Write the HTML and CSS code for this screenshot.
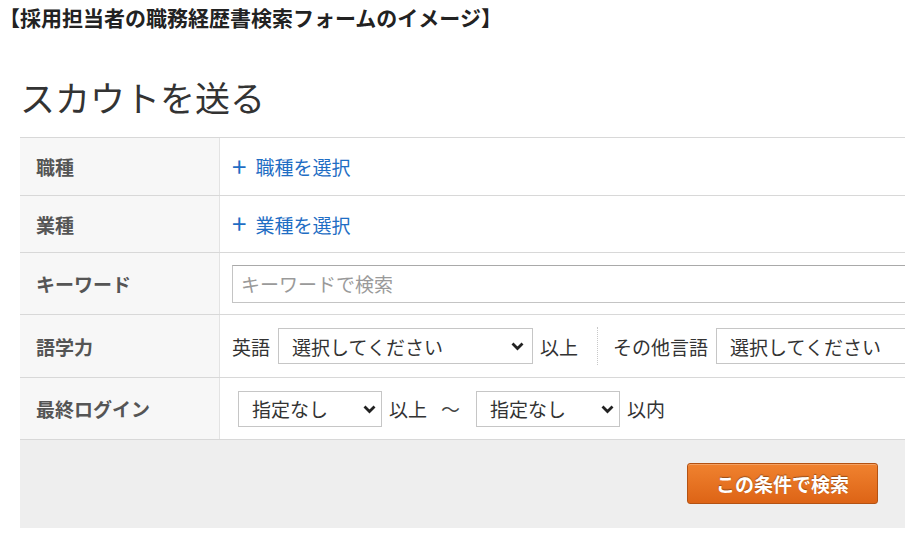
FILE: index.html
```html
<!DOCTYPE html>
<html lang="ja">
<head>
<meta charset="utf-8">
<title>スカウトを送る</title>
<link rel="stylesheet" href="styles.css">
</head>
<body>
<div class="caption">【採用担当者の職務経歴書検索フォームのイメージ】</div>
<h1 class="title">スカウトを送る</h1>
<div class="form">
  <div class="row row-a">
    <div class="label">職種</div>
    <div class="field"><a class="add" href="#"><span class="plus">+</span>職種を選択</a></div>
  </div>
  <div class="row row-b">
    <div class="label">業種</div>
    <div class="field"><a class="add" href="#"><span class="plus">+</span>業種を選択</a></div>
  </div>
  <div class="row row-c">
    <div class="label">キーワード</div>
    <div class="field"><input class="keyword" type="text" placeholder="キーワードで検索"></div>
  </div>
  <div class="row row-d">
    <div class="label">語学力</div>
    <div class="field">
      <span class="txt">英語</span>
      <span class="sel sel-lang">
        <select><option>選択してください</option></select>
        <svg class="chev" width="13" height="9" viewBox="0 0 13 9"><path d="M1.5 1.5 L6.5 6.5 L11.5 1.5" fill="none" stroke="#222" stroke-width="2.8"/></svg>
      </span>
      <span class="txt after">以上</span>
      <span class="sep"></span>
      <span class="txt">その他言語</span>
      <span class="sel sel-other">
        <select><option>選択してください</option></select>
      </span>
    </div>
  </div>
  <div class="row row-e">
    <div class="label">最終ログイン</div>
    <div class="field">
      <span class="sel sel-login first">
        <select><option>指定なし</option></select>
        <svg class="chev" width="13" height="9" viewBox="0 0 13 9"><path d="M1.5 1.5 L6.5 6.5 L11.5 1.5" fill="none" stroke="#222" stroke-width="2.8"/></svg>
      </span>
      <span class="txt after">以上</span>
      <span class="txt tilde">～</span>
      <span class="sel sel-login">
        <select><option>指定なし</option></select>
        <svg class="chev" width="13" height="9" viewBox="0 0 13 9"><path d="M1.5 1.5 L6.5 6.5 L11.5 1.5" fill="none" stroke="#222" stroke-width="2.8"/></svg>
      </span>
      <span class="txt after">以内</span>
    </div>
  </div>
  <div class="footer">
    <button class="submit" type="button">この条件で検索</button>
  </div>
</div>
</body>
</html>
```

FILE: styles.css
```css
body {
  margin: 0;
  font-family: "Noto Sans CJK JP", "Noto Sans", sans-serif;
  color: #333;
  background: #fff;
}

.caption {
  margin: 5px 0 0 -1px;
  font-size: 21px;
  line-height: 24px;
  font-weight: 700;
  color: #222;
}

.title {
  margin: 48px 0 20px 20px;
  font-size: 35px;
  line-height: 40px;
  font-weight: 400;
  color: #333;
}

.form {
  margin-left: 20px;
  width: 885px;
  border-top: 1px solid #d8d8d8;
  overflow: hidden;
}

.row {
  display: flex;
  border-bottom: 1px solid #d8d8d8;
}

.row-a { height: 57px; }
.row-b { height: 56px; }
.row-c { height: 61px; }
.row-d { height: 62px; }
.row-e { height: 61px; }

.label {
  flex: none;
  width: 200px;
  box-sizing: border-box;
  padding-left: 16px;
  background: #f7f7f7;
  border-right: 1px solid #e3e3e3;
  display: flex;
  align-items: center;
  font-size: 19px;
  font-weight: 700;
  color: #555;
}

.field {
  flex: 1;
  min-width: 0;
  display: flex;
  align-items: center;
  padding-left: 12px;
  font-size: 19px;
  color: #333;
  white-space: nowrap;
}

.add {
  color: #1f6ec4;
  text-decoration: none;
  font-size: 19px;
  display: flex;
  align-items: center;
}

.plus {
  font-size: 26px;
  font-weight: 400;
  line-height: 1;
  margin-right: 9px;
  position: relative;
  top: -1px;
}

.keyword {
  flex: none;
  width: 720px;
  height: 38px;
  box-sizing: border-box;
  border: 1px solid #c4c4c4;
  border-top-color: #a9a9a9;
  padding: 0 8px;
  font-family: inherit;
  font-size: 19px;
  color: #333;
  outline: none;
}

.keyword::placeholder {
  color: #9a9a9a;
}

.txt {
  flex: none;
}

.sel {
  flex: none;
  position: relative;
  display: block;
}

.sel select {
  display: block;
  appearance: none;
  -webkit-appearance: none;
  height: 36px;
  box-sizing: border-box;
  border: 1px solid #c6c6c6;
  border-radius: 0;
  background: #fff;
  padding: 0 0 0 13px;
  font-family: inherit;
  font-size: 19px;
  color: #333;
  width: 100%;
}

.sel .chev {
  position: absolute;
  right: 9px;
  top: 14px;
}

.sel-lang {
  width: 255px;
  margin-left: 8px;
}

.sel-other {
  width: 260px;
  margin-left: 8px;
}

.sel-login {
  width: 144px;
}

.sel-login .chev {
  right: 6px;
}

.sel-login.first {
  margin-left: 6px;
}

.after {
  margin-left: 7px;
}

.sep {
  flex: none;
  width: 0;
  height: 38px;
  border-left: 1px dotted #c8c8c8;
  margin: 0 15px 0 19px;
}

.tilde {
  margin: 0 16px 0 14px;
  color: #444;
}

.footer {
  height: 88px;
  background: #eeeeee;
  display: flex;
  justify-content: flex-end;
  align-items: flex-start;
  padding: 23px 27px 0 0;
  box-sizing: border-box;
}

.submit {
  width: 191px;
  height: 41px;
  border: 1px solid #b45212;
  border-radius: 3px;
  background: linear-gradient(#f0822f, #dd6416);
  box-shadow: inset 0 1px 0 rgba(255, 255, 255, 0.25);
  color: #fff;
  font-family: inherit;
  font-size: 19px;
  font-weight: 700;
  text-shadow: 0 -1px 1px rgba(0, 0, 0, 0.35);
  padding: 0;
  cursor: pointer;
}
```
